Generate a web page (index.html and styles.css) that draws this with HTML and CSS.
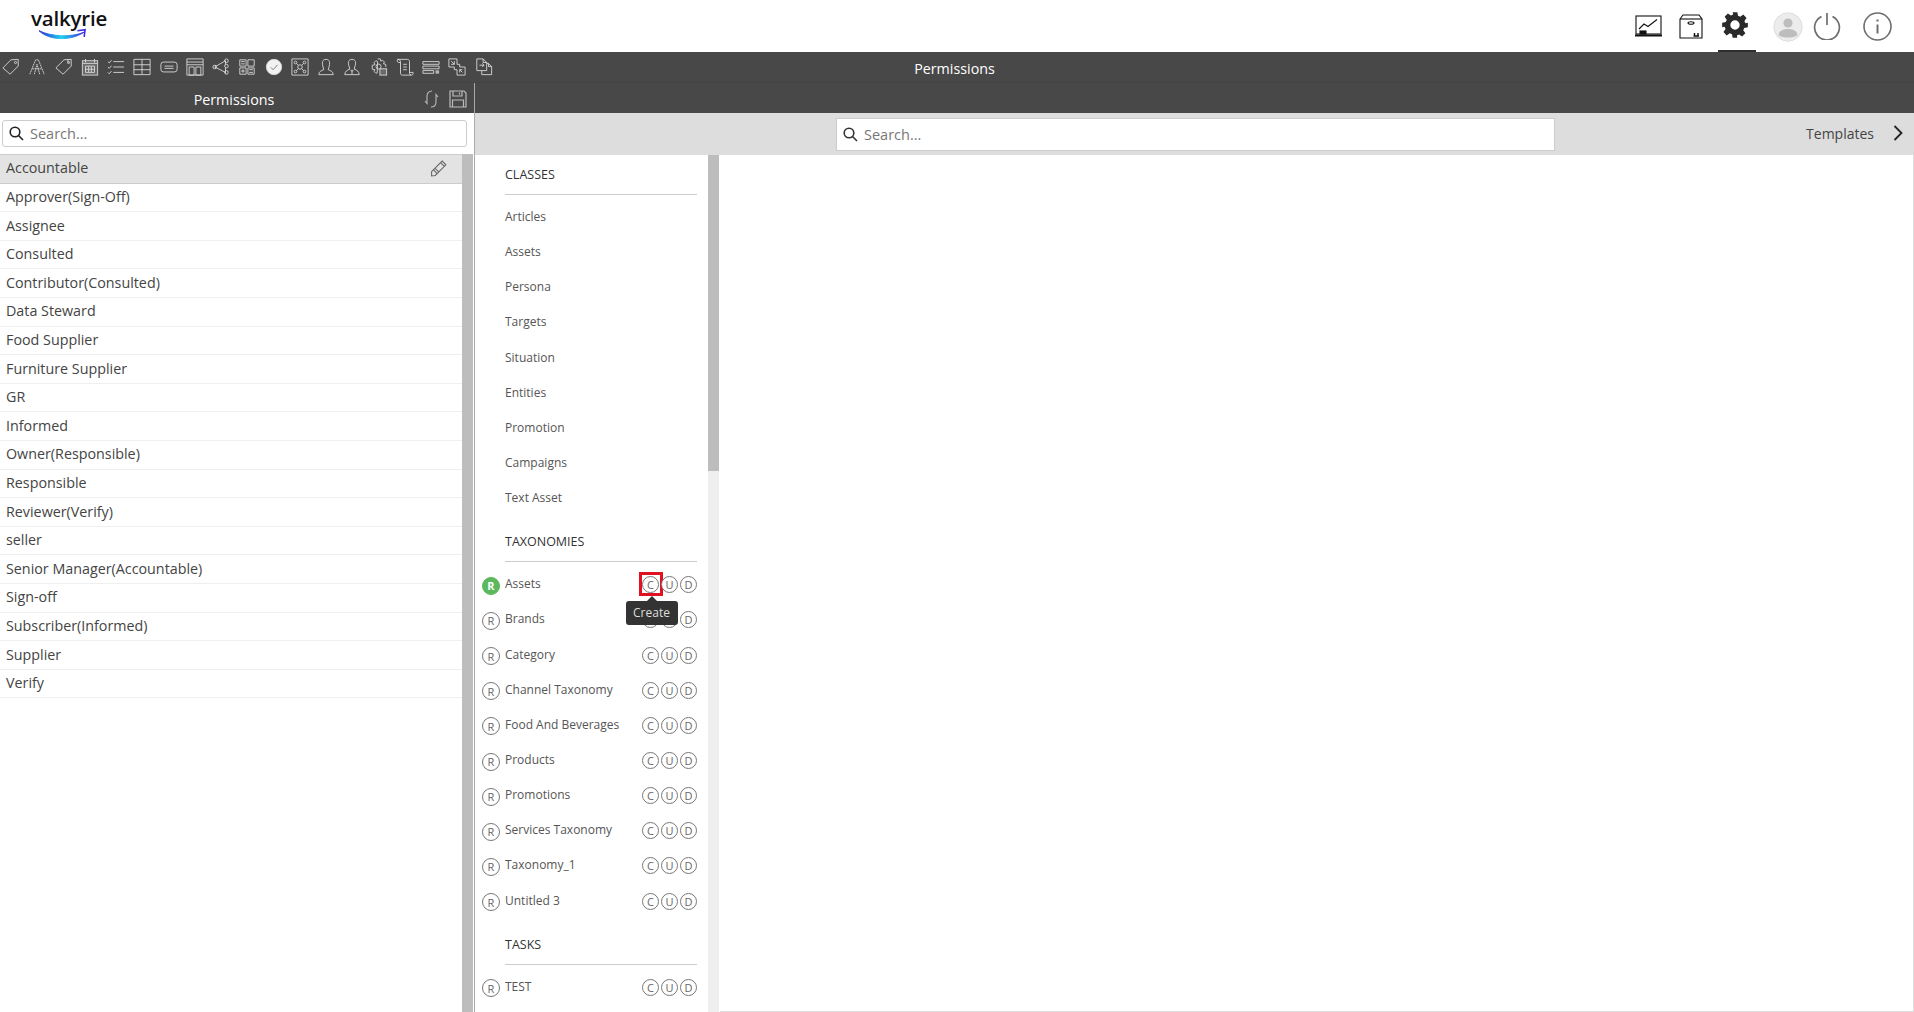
FILE: index.html

```html
<!DOCTYPE html>
<html lang="en">
<head>
    <meta charset="UTF-8">
    <title>Permissions</title>
    <link rel="stylesheet" href="styles.css">
</head>
<body>
    <header class="topbar">
        <div class="logo">
            <span class="logo-text">valkyrie</span>
            <svg class="logo-smile" width="50" height="14" viewBox="0 0 52 14">
                <defs>
                    <linearGradient id="smile" x1="0" x2="1" y1="0" y2="0">
                        <stop offset="0" stop-color="#2a2ad8"/>
                        <stop offset="0.5" stop-color="#1fd0ee"/>
                        <stop offset="1" stop-color="#3a2ae0"/>
                    </linearGradient>
                </defs>
                <path d="M1 2.500C12 13 34 13.500 48 4C36 9.500 14 9 1 2.500Z" fill="url(#smile)" stroke="url(#smile)" stroke-width="1"/>
                <path d="M41 2.500L49 1.500L48 9" fill="none" stroke="#3a2ae0" stroke-width="1.600"/>
            </svg>
        </div>
        <nav class="top-icons">
            <svg class="ti-chart" width="29" height="22" viewBox="0 0 29 22" fill="none" stroke="#111" stroke-width="1.100">
                <rect x="2" y="1" width="25" height="18"/>
                <path d="M1 20.500H28" stroke-width="2"/>
                <path d="M5 14L10 9L14 11.500L23 4.500"/>
                <rect x="6" y="16" width="6" height="3" fill="#111"/>
            </svg>
            <svg class="ti-box" width="24" height="25" viewBox="0 0 24 25" fill="none" stroke="#111" stroke-width="1.100">
                <path d="M1 5L4 1H20L23 5V24H1Z"/>
                <path d="M1 5H23"/>
                <ellipse cx="12" cy="9" rx="3" ry="1.200"/>
                <path d="M15.500 19V22M19 19V22M14.500 22H20" stroke-width="1.400"/>
            </svg>
            <div class="ti-active">
                <svg width="28" height="28" viewBox="0 0 24 24" fill="#2a2a2a">
                    <path fill-rule="evenodd" d="M10 1h4l.6 3.100 1.900.8 2.600-1.800 2.800 2.800-1.800 2.600.8 1.900L23 10v4l-3.100.6-.8 1.900 1.800 2.600-2.800 2.800-2.600-1.800-1.900.8L14 23h-4l-.6-3.100-1.900-.8-2.600 1.800-2.800-2.800 1.800-2.600-.8-1.900L1 14v-4l3.100-.6.8-1.900-1.800-2.600 2.800-2.800 2.600 1.800 1.900-.8zM12 8a4 4 0 1 0 0 8 4 4 0 0 0 0-8z"/>
                </svg>
            </div>
            <svg class="ti-avatar" width="30" height="30" viewBox="0 0 30 30">
                <circle cx="15" cy="15" r="14.200" fill="#ececec" stroke="#ddd"/>
                <circle cx="15" cy="11" r="4.600" fill="#bdbdbd"/>
                <path d="M5.500 23C6.500 18 11 17 15 17C19 17 23.500 18 24.500 23C22 25 19 25.500 15 25.500C11 25.500 8 25 5.500 23Z" fill="#bdbdbd"/>
            </svg>
            <svg class="ti-power" width="28" height="28" viewBox="0 0 28 28" fill="none" stroke="#6e6e6e" stroke-width="1.700">
                <path d="M8.500 4.500A12.400 12.400 0 1 0 19.500 4.500"/>
                <path d="M14 1V13"/>
            </svg>
            <svg class="ti-info" width="29" height="29" viewBox="0 0 29 29" fill="none" stroke="#6e6e6e" stroke-width="1.600">
                <circle cx="14.500" cy="14.500" r="13.500"/>
                <path d="M14.500 12.500V21.500" stroke-width="2"/>
                <path d="M14.500 7.500V9.500" stroke-width="2.200"/>
            </svg>
        </nav>
    </header>

    <div class="toolbar">
        <div class="tool-icons">
            <svg viewBox="0 0 20 20"><path d="M1 11L10 2L18 1.500L18 9L9 18Z"/><circle cx="15" cy="5" r="1.200"/></svg>
            <svg viewBox="0 0 20 20"><path d="M2 18L8.500 2H11.500L18 18M5 12H15M7 18L10 7L13 18" stroke-dasharray="2 .6"/></svg>
            <svg viewBox="0 0 20 20"><path d="M1 11L10 2L18 1.500L18 9L9 18Z"/><path d="M14 1.500L15 5"/><circle cx="15" cy="5" r="1.200"/></svg>
            <svg viewBox="0 0 20 20"><rect x="1.500" y="3" width="17" height="16" fill="#6a6a6a"/><path d="M5 1V5M15 1V5M1.500 6H18.500M5 9H15V16H5ZM5 12.500H15M8.500 9V16M11.500 9V16"/></svg>
            <svg viewBox="0 0 20 20"><path d="M7 4H19M7 10H19M7 16H19M1 4L2.500 5.500L5 2.500M1 10L2.500 11.500L5 8.500M1 16L2.500 17.500L5 14.500"/></svg>
            <svg viewBox="0 0 20 20"><path d="M1 1.500H19V18.500H1ZM1 7.500H19M1 13H19M10 1.500V18.500"/></svg>
            <svg viewBox="0 0 20 20"><rect x="1" y="4.500" width="18" height="11" rx="3"/><path d="M5 9H15M5 11.500H15"/></svg>
            <svg viewBox="0 0 20 20"><path d="M1 1H19V19H1ZM1 4.500H19M1 7.500H19M3.500 10H9V19H3.500ZM11 10H16.500V19H11Z"/></svg>
            <svg viewBox="0 0 20 20"><path d="M3 10L15 3M3 10L15 16M15 3V8M15 11V17" /><circle cx="3" cy="10" r="2"/><circle cx="16" cy="3" r="2"/><circle cx="16" cy="9" r="2"/><circle cx="16" cy="16" r="2"/></svg>
            <svg viewBox="0 0 20 20"><path d="M2 2H9V9H2ZM11 2H18V9H11ZM2 11H9V18H2ZM11 11H18V18H11ZM3.500 4H7.500M3.500 6.500H7.500M3.500 14.500H7.500M5.500 12.500V16.500M12.500 13H16.500M12.500 16H16.500"/></svg>
            <svg viewBox="0 0 20 20"><circle cx="10" cy="10" r="8.500" fill="#f2f2f2"/><path d="M6.500 10.500L9 13L14 7.500" stroke="#777"/></svg>
            <svg viewBox="0 0 20 20"><path d="M1 1H19V19H1Z"/><circle cx="10" cy="10" r="2.500"/><circle cx="5" cy="5" r="1.500"/><circle cx="15" cy="5" r="1.500"/><circle cx="5" cy="15" r="1.500"/><circle cx="15" cy="15" r="1.500"/><path d="M6 6L8 8M14 6L12 8M6 14L8 12M14 14L12 12"/></svg>
            <svg viewBox="0 0 20 20"><path d="M7 11C5 5 6 1.500 10 1.500C14 1.500 15 5 13 11L12.500 13C15 14 18 15 18 18.500H2C2 15 5 14 7.500 13Z"/></svg>
            <svg viewBox="0 0 20 20"><path d="M7 10C5 5 6 1.500 10 1.500C14 1.500 15 5 13 10L12.500 12.500C15 13 18 15 18 18.500H2C2 15 5 13 7.500 12.500ZM10 13V18.500M8.500 13.500L10 15L11.500 13.500"/></svg>
            <svg viewBox="0 0 20 20"><path d="M8.500 1H11.500L12 3.500L14 2.500L16 4.500L15 6.500L17.500 7V10M8 16.500L6.500 17L4.500 15L5.500 13L2.500 12.500V8L5.500 7.500L4.500 5L6.500 3L8.500 4Z"/><circle cx="9.500" cy="9.500" r="2.800"/><rect x="11" y="12" width="7.500" height="7" fill="#6a6a6a"/></svg>
            <svg viewBox="0 0 20 20"><path d="M2 1.500H13C14.500 1.500 15 3 15 4V17C15 18 16 19 17 19H7C5.500 19 5 18 5 17V4C5 3 4 1.500 2 1.500C1 1.500 1 5 3 5H5M8 7H12M8 10H12M8 13H12M15 16H19V17.500C19 18.500 18 19 17 19"/></svg>
            <svg viewBox="0 0 20 20"><path d="M1 4H19V7H1ZM1 9H19V12H1ZM1 14H13V17H1Z"/><path d="M15 14.500H19M15 16.500H19" stroke-width="1.500"/></svg>
            <svg viewBox="0 0 20 20"><path d="M1 1H10V7H13V10H19V19H10V13H7V10H1Z"/><path d="M3.500 3.500L7 7M7 3.500V7H3.500M16 16L13 13M13 16V13H16"/></svg>
            <svg viewBox="0 0 20 20"><path d="M2 1H9L13 5V14H2ZM9 1V5H13"/><path d="M5 8H10M8 6L10 8L8 10"/><path d="M13 6H15L18.500 9.500V18.500H7.500V14M15 6V9.500H18.500"/></svg>
        </div>
        <div class="toolbar-title">Permissions</div>
    </div>

    <div class="columns">
        <aside class="left">
            <div class="left-head">
                <span class="left-title">Permissions</span>
                <svg class="lh-sync" width="15" height="18" viewBox="0 0 15 18" fill="none" stroke="#bbb" stroke-width="1.100">
                    <path d="M1 11L3 13.500V6C3 3 5 1 8 1M1.500 12.500"/>
                    <path d="M14 7L12 4.500V12C12 15 10 17 7 17"/>
                </svg>
                <svg class="lh-save" width="18" height="18" viewBox="0 0 18 18" fill="none" stroke="#bbb" stroke-width="1.200">
                    <path d="M1 1H15L17 3V17H1Z"/>
                    <path d="M4 1V6H13V1M10.500 2.500V4.500M3.500 17V10H14.500V17"/>
                </svg>
            </div>
            <div class="left-search">
                <div class="search-box">
                    <svg class="search-icon" width="15" height="15" viewBox="0 0 15 15" fill="none" stroke="#222" stroke-width="1.600">
                        <circle cx="6" cy="6" r="4.800"/>
                        <path d="M9.500 9.500L14 14"/>
                    </svg>
                    <span>Search...</span>
                </div>
            </div>
            <div class="left-body">
                <ul class="role-list">
                    <li class="role selected">
                        Accountable
                        <svg class="pencil" width="18" height="18" viewBox="0 0 16 17" fill="none" stroke="#666" stroke-width="1">
                            <path d="M1 12L11 2L14.500 5.500L4.500 15.500L1 16ZM9.500 3.500L13 7M3 10.500L6 13.500M4.500 9L8 12.500"/>
                        </svg>
                    </li>
                    <li class="role">Approver(Sign-Off)</li>
                    <li class="role">Assignee</li>
                    <li class="role">Consulted</li>
                    <li class="role">Contributor(Consulted)</li>
                    <li class="role">Data Steward</li>
                    <li class="role">Food Supplier</li>
                    <li class="role">Furniture Supplier</li>
                    <li class="role">GR</li>
                    <li class="role">Informed</li>
                    <li class="role">Owner(Responsible)</li>
                    <li class="role">Responsible</li>
                    <li class="role">Reviewer(Verify)</li>
                    <li class="role">seller</li>
                    <li class="role">Senior Manager(Accountable)</li>
                    <li class="role">Sign-off</li>
                    <li class="role">Subscriber(Informed)</li>
                    <li class="role">Supplier</li>
                    <li class="role">Verify</li>
                </ul>
                <div class="left-scroll"></div>
            </div>
        </aside>

        <main class="right">
            <div class="right-head"></div>
            <div class="right-search">
                <div class="search-box main-search">
                    <svg class="search-icon" width="15" height="15" viewBox="0 0 15 15" fill="none" stroke="#333" stroke-width="1.600">
                        <circle cx="6" cy="6" r="4.800"/>
                        <path d="M9.500 9.500L14 14"/>
                    </svg>
                    <span>Search...</span>
                </div>
                <div class="templates">
                    <span>Templates</span>
                    <svg width="10" height="16" viewBox="0 0 10 16" fill="none" stroke="#222" stroke-width="1.800">
                        <path d="M1.500 1L8.500 8L1.500 15"/>
                    </svg>
                </div>
            </div>
            <div class="right-body">
                <section class="perm-col">
                    <h3 class="perm-title">CLASSES</h3>
                    <div class="perm-row"><span class="perm-name">Articles</span></div>
                    <div class="perm-row"><span class="perm-name">Assets</span></div>
                    <div class="perm-row"><span class="perm-name">Persona</span></div>
                    <div class="perm-row"><span class="perm-name">Targets</span></div>
                    <div class="perm-row"><span class="perm-name">Situation</span></div>
                    <div class="perm-row"><span class="perm-name">Entities</span></div>
                    <div class="perm-row"><span class="perm-name">Promotion</span></div>
                    <div class="perm-row"><span class="perm-name">Campaigns</span></div>
                    <div class="perm-row"><span class="perm-name">Text Asset</span></div>

                    <h3 class="perm-title next">TAXONOMIES</h3>
                    <div class="perm-row">
                        <span class="dot read on">R</span><span class="perm-name">Assets</span>
                        <span class="cud">
                            <span class="dot hilite">C<span class="tooltip">Create</span></span><span class="dot">U</span><span class="dot">D</span>
                        </span>
                    </div>
                    <div class="perm-row"><span class="dot read">R</span><span class="perm-name">Brands</span><span class="cud"><span class="dot">C</span><span class="dot">U</span><span class="dot">D</span></span></div>
                    <div class="perm-row"><span class="dot read">R</span><span class="perm-name">Category</span><span class="cud"><span class="dot">C</span><span class="dot">U</span><span class="dot">D</span></span></div>
                    <div class="perm-row"><span class="dot read">R</span><span class="perm-name">Channel Taxonomy</span><span class="cud"><span class="dot">C</span><span class="dot">U</span><span class="dot">D</span></span></div>
                    <div class="perm-row"><span class="dot read">R</span><span class="perm-name">Food And Beverages</span><span class="cud"><span class="dot">C</span><span class="dot">U</span><span class="dot">D</span></span></div>
                    <div class="perm-row"><span class="dot read">R</span><span class="perm-name">Products</span><span class="cud"><span class="dot">C</span><span class="dot">U</span><span class="dot">D</span></span></div>
                    <div class="perm-row"><span class="dot read">R</span><span class="perm-name">Promotions</span><span class="cud"><span class="dot">C</span><span class="dot">U</span><span class="dot">D</span></span></div>
                    <div class="perm-row"><span class="dot read">R</span><span class="perm-name">Services Taxonomy</span><span class="cud"><span class="dot">C</span><span class="dot">U</span><span class="dot">D</span></span></div>
                    <div class="perm-row"><span class="dot read">R</span><span class="perm-name">Taxonomy_1</span><span class="cud"><span class="dot">C</span><span class="dot">U</span><span class="dot">D</span></span></div>
                    <div class="perm-row"><span class="dot read">R</span><span class="perm-name">Untitled 3</span><span class="cud"><span class="dot">C</span><span class="dot">U</span><span class="dot">D</span></span></div>

                    <h3 class="perm-title next">TASKS</h3>
                    <div class="perm-row"><span class="dot read">R</span><span class="perm-name">TEST</span><span class="cud"><span class="dot">C</span><span class="dot">U</span><span class="dot">D</span></span></div>
                </section>
                <div class="perm-scroll"><div class="perm-thumb"></div></div>
                <section class="detail"></section>
            </div>
        </main>
    </div>
</body>
</html>
```

FILE: styles.css

```css
* {
    box-sizing: border-box;
}
html, body {
    margin: 0;
    height: 100%;
    overflow: hidden;
}
body {
    font-family: "Open Sans", sans-serif;
    color: #444;
    background: #fff;
    display: flex;
    flex-direction: column;
}

/* top bar */
.topbar {
    height: 52px;
    flex: none;
    display: flex;
    justify-content: space-between;
    background: #fff;
}
.logo {
    padding: 6px 0 0 31px;
    display: flex;
    flex-direction: column;
    align-items: flex-start;
}
.logo-text {
    font-size: 20.5px;
    font-weight: 600;
    line-height: 24px;
    letter-spacing: -0.2px;
    color: #111;
}
.logo-smile {
    margin: -2px 0 0 7px;
}
.top-icons {
    display: flex;
    align-items: flex-start;
    padding-right: 22px;
}
.ti-chart {
    margin-top: 15px;
}
.ti-box {
    margin: 14px 0 0 16px;
}
.ti-active {
    width: 38px;
    height: 52px;
    margin-left: 15px;
    padding: 11px 0 0 3px;
    border-bottom: 2px solid #2e2e2e;
}
.ti-avatar {
    margin: 12px 0 0 17px;
}
.ti-power {
    margin: 12px 0 0 10px;
}
.ti-info {
    margin: 12px 0 0 22px;
}

/* dark toolbar */
.toolbar {
    height: 31px;
    flex: none;
    position: relative;
    background: #484848;
    border-bottom: 1px solid #434343;
    display: flex;
    align-items: center;
}
.tool-icons {
    display: flex;
    gap: 8.25px;
    padding: 0 0 1px 2px;
}
.tool-icons svg {
    width: 18px;
    height: 18px;
    fill: none;
    stroke: #d8d8d8;
    stroke-width: 1;
}
.toolbar-title {
    position: absolute;
    left: 0;
    right: 5px;
    top: 7px;
    text-align: center;
    color: #fff;
    font-size: 14.3px;
    line-height: 20px;
}

.columns {
    flex: 1;
    display: flex;
    min-height: 0;
}

/* left column */
.left {
    width: 475px;
    flex: none;
    display: flex;
    flex-direction: column;
    border-right: 1px solid #aaa;
}
.left-head {
    height: 30px;
    flex: none;
    background: #484848;
    display: flex;
    align-items: center;
    position: relative;
    color: #fff;
    font-size: 14.3px;
    padding: 2px 7px 0 0;
    justify-content: flex-end;
    gap: 10px;
}
.left-title {
    position: absolute;
    left: 0;
    width: 468px;
    text-align: center;
}
.left-search {
    height: 41px;
    flex: none;
    padding: 7px 7px 0 2px;
}
.search-box {
    height: 27px;
    background: #fff;
    border: 1px solid #ccc;
    border-radius: 3px;
    display: flex;
    align-items: center;
    gap: 6px;
    padding-left: 6px;
    font-size: 14.5px;
    color: #777;
}
.left-body {
    flex: 1;
    display: flex;
    min-height: 0;
    padding-right: 1px;
}
.role-list {
    flex: 1;
    list-style: none;
    margin: 0;
    padding: 0;
    border-top: 1px solid #ccc;
}
.role {
    height: 28.6px;
    line-height: 26.6px;
    padding-left: 6px;
    font-size: 14.3px;
    color: #444;
    border-bottom: 1px solid #efefef;
    display: flex;
    justify-content: space-between;
    align-items: center;
}
.role.selected {
    background: #e3e3e3;
    border-bottom-color: #ccc;
    padding-bottom: 2px;
}
.pencil {
    margin-right: 14px;
}
.left-scroll {
    width: 11px;
    background: #bdbdbd;
}

/* right column */
.right {
    flex: 1;
    display: flex;
    flex-direction: column;
    min-width: 0;
}
.right-head {
    height: 30px;
    flex: none;
    background: #484848;
}
.right-search {
    height: 42px;
    flex: none;
    background: #ddd;
    position: relative;
    display: flex;
    justify-content: flex-end;
    align-items: center;
    padding: 0 11px 2px 0;
}
.main-search {
    position: absolute;
    left: 361px;
    top: 5px;
    width: 719px;
    height: 33px;
    border-radius: 0;
    gap: 6px;
    padding-left: 6px;
}
.templates {
    display: flex;
    align-items: center;
    gap: 19px;
    font-size: 14px;
    color: #444;
}
.right-body {
    flex: 1;
    display: flex;
    min-height: 0;
    padding-left: 1px;
}
.perm-col {
    width: 232px;
    flex: none;
    background: #fff;
    padding: 0 11px 0 6px;
    overflow: hidden;
}
.perm-title {
    margin: 0 0 5px 23px;
    height: 40px;
    padding-top: 11px;
    font-size: 12.5px;
    line-height: 18px;
    font-weight: 400;
    color: #333;
    border-bottom: 1px solid #ccc;
}
.perm-title.next {
    margin-top: 6px;
    margin-bottom: 5px;
}
.perm-row {
    height: 35.15px;
    display: flex;
    align-items: center;
    font-size: 12px;
    color: #555;
}
.perm-name {
    margin-left: 23px;
    margin-top: -2px;
}
.dot {
    width: 17px;
    height: 17px;
    border: 1px solid #777;
    border-radius: 50%;
    display: inline-flex;
    align-items: center;
    justify-content: center;
    font-size: 11px;
    line-height: 1;
    color: #666;
    background: #fff;
    position: relative;
}
.dot.read {
    margin: 0 -18px 0 0;
    width: 18px;
    height: 18px;
    position: relative;
    top: 1px;
}
.dot.on {
    background: #5cb85c;
    border-color: #5cb85c;
    color: #fff;
    font-weight: 700;
}
.cud {
    margin-left: auto;
    display: flex;
    gap: 2px;
    position: relative;
}
.dot.hilite::after {
    content: "";
    box-sizing: border-box;
    position: absolute;
    left: -4px;
    top: -5px;
    width: 24px;
    height: 24px;
    border: 3px solid #e01222;
}
.tooltip {
    position: absolute;
    left: 50%;
    top: 24px;
    margin-left: 1px;
    transform: translateX(-50%);
    width: 52px;
    height: 24px;
    background: #333;
    border-radius: 3px;
    color: #ddd;
    font-size: 12px;
    line-height: 24px;
    text-align: center;
    z-index: 2;
}
.tooltip::before {
    content: "";
    position: absolute;
    left: 50%;
    top: -5px;
    margin-left: -5px;
    border-left: 5px solid transparent;
    border-right: 5px solid transparent;
    border-bottom: 5px solid #333;
}
.perm-scroll {
    width: 11px;
    flex: none;
    background: #efefef;
}
.perm-thumb {
    height: 316px;
    background: #bdbdbd;
}
.detail {
    flex: 1;
    background: #fff;
    margin-left: 1px;
    border-right: 1px solid #ddd;
    border-bottom: 1px solid #ddd;
}
```
